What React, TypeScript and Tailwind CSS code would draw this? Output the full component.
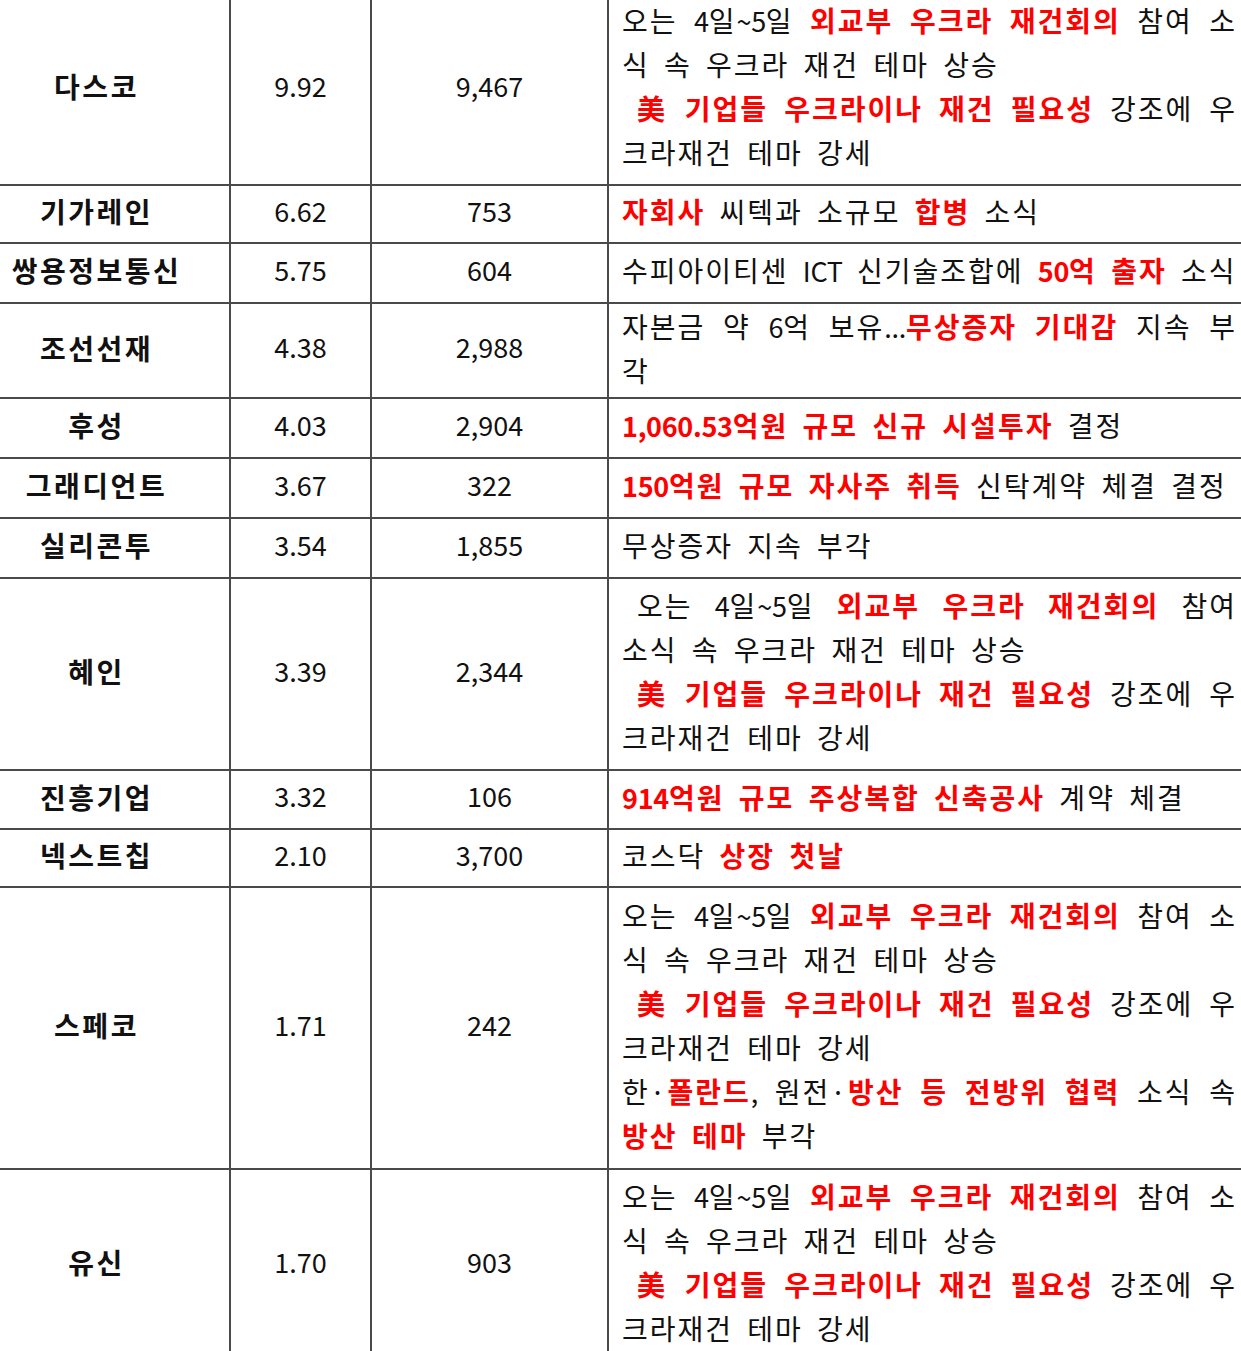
import React from "react";

type Seg = { t: string; red?: boolean };
type Line = { segs: Seg[]; justify?: boolean; indent?: boolean };
type Row = { name: string; rate: string; price: string; h: string; lines: Line[] };

const b = (t: string): Seg => ({ t });
const r = (t: string): Seg => ({ t, red: true });

const ukraine: Line[] = [
  { segs: [b("오는 4일~5일 "), r("외교부 우크라 재건회의"), b(" 참여 소")], justify: true },
  { segs: [b("식 속 우크라 재건 테마 상승")] },
  { segs: [r("美 기업들 우크라이나 재건 필요성"), b(" 강조에 우")], justify: true, indent: true },
  { segs: [b("크라재건 테마 강세")] },
];

const rows: Row[] = [
  { name: "다스코", rate: "9.92", price: "9,467", h: "h-[192px]", lines: ukraine },
  {
    name: "기가레인",
    rate: "6.62",
    price: "753",
    h: "h-[58px]",
    lines: [{ segs: [r("자회사"), b(" 씨텍과 소규모 "), r("합병"), b(" 소식")] }],
  },
  {
    name: "쌍용정보통신",
    rate: "5.75",
    price: "604",
    h: "h-[60px]",
    lines: [{ segs: [b("수피아이티센 ICT 신기술조합에 "), r("50억 출자"), b(" 소식")] }],
  },
  {
    name: "조선선재",
    rate: "4.38",
    price: "2,988",
    h: "h-[95px]",
    lines: [
      { segs: [b("자본금 약 6억 보유..."), r("무상증자 기대감"), b(" 지속 부")], justify: true },
      { segs: [b("각")] },
    ],
  },
  {
    name: "후성",
    rate: "4.03",
    price: "2,904",
    h: "h-[60px]",
    lines: [{ segs: [r("1,060.53억원 규모 신규 시설투자"), b(" 결정")] }],
  },
  {
    name: "그래디언트",
    rate: "3.67",
    price: "322",
    h: "h-[60px]",
    lines: [{ segs: [r("150억원 규모 자사주 취득"), b(" 신탁계약 체결 결정")] }],
  },
  {
    name: "실리콘투",
    rate: "3.54",
    price: "1,855",
    h: "h-[60px]",
    lines: [{ segs: [b("무상증자 지속 부각")] }],
  },
  {
    name: "혜인",
    rate: "3.39",
    price: "2,344",
    h: "h-[192px]",
    lines: [
      { segs: [b("오는 4일~5일 "), r("외교부 우크라 재건회의"), b(" 참여")], justify: true, indent: true },
      { segs: [b("소식 속 우크라 재건 테마 상승")] },
      { segs: [r("美 기업들 우크라이나 재건 필요성"), b(" 강조에 우")], justify: true, indent: true },
      { segs: [b("크라재건 테마 강세")] },
    ],
  },
  {
    name: "진흥기업",
    rate: "3.32",
    price: "106",
    h: "h-[59px]",
    lines: [{ segs: [r("914억원 규모 주상복합 신축공사"), b(" 계약 체결")] }],
  },
  {
    name: "넥스트칩",
    rate: "2.10",
    price: "3,700",
    h: "h-[58px]",
    lines: [{ segs: [b("코스닥 "), r("상장 첫날")] }],
  },
  {
    name: "스페코",
    rate: "1.71",
    price: "242",
    h: "h-[282px]",
    lines: [
      ...ukraine,
      {
        segs: [b("한·"), r("폴란드"), b(", 원전·"), r("방산 등 전방위 협력"), b(" 소식 속")],
        justify: true,
      },
      { segs: [r("방산 테마"), b(" 부각")] },
    ],
  },
  { name: "유신", rate: "1.70", price: "903", h: "h-[192px]", lines: ukraine },
];

// latin letters and digits sit tighter than the hangul around them
function Runs({ text }: { text: string }) {
  const parts = text.split(/([0-9A-Za-z,.~]+)/);
  return (
    <>
      {parts.map((p, i) =>
        i % 2 === 1 ? (
          <span key={i} className="tracking-[-0.3px] text-[27px]">
            {p}
          </span>
        ) : (
          p
        )
      )}
    </>
  );
}

function Desc({ lines }: { lines: Line[] }) {
  return (
    <div className="flex flex-col text-[28px] tracking-[2px] [word-spacing:6px]">
      {lines.map((line, i) => (
        <div
          key={i}
          className={`h-[44px] leading-[44px] whitespace-pre ${
            line.justify ? "text-justify [text-align-last:justify]" : "text-left"
          } ${line.indent ? "pl-[15px]" : ""}`}
        >
          {line.segs.map((s, j) => (
            <span key={j} className={s.red ? "font-bold text-[#ff0000]" : ""}>
              <Runs text={s.t} />
            </span>
          ))}
        </div>
      ))}
    </div>
  );
}

export default function App() {
  return (
    <div className="w-[1241px] h-[1351px] overflow-hidden bg-white font-['Noto_Sans_CJK_KR','Noto_Sans',sans-serif] text-[#111]">
      <div className="-mt-[6px] flex flex-col">
        {rows.map((row) => (
          <div key={row.name} className={`flex border-b-2 border-[#4a4a4a] ${row.h}`}>
            <div className="w-[231px] shrink-0 border-r-2 border-[#4a4a4a] pr-[36px] pb-[6px] flex items-center justify-center font-bold text-[28px] tracking-[2.5px]">
              {row.name}
            </div>
            <div className="w-[141px] shrink-0 border-r-2 border-[#4a4a4a] pb-[6px] flex items-center justify-center text-[27px]">
              {row.rate}
            </div>
            <div className="w-[237px] shrink-0 border-r-2 border-[#4a4a4a] pb-[6px] flex items-center justify-center text-[27px]">
              {row.price}
            </div>
            <div className="flex-1 min-w-0 pl-[13px] pr-[4px] pb-[6px] flex items-center">
              <div className="w-full">
                <Desc lines={row.lines} />
              </div>
            </div>
          </div>
        ))}
      </div>
    </div>
  );
}
